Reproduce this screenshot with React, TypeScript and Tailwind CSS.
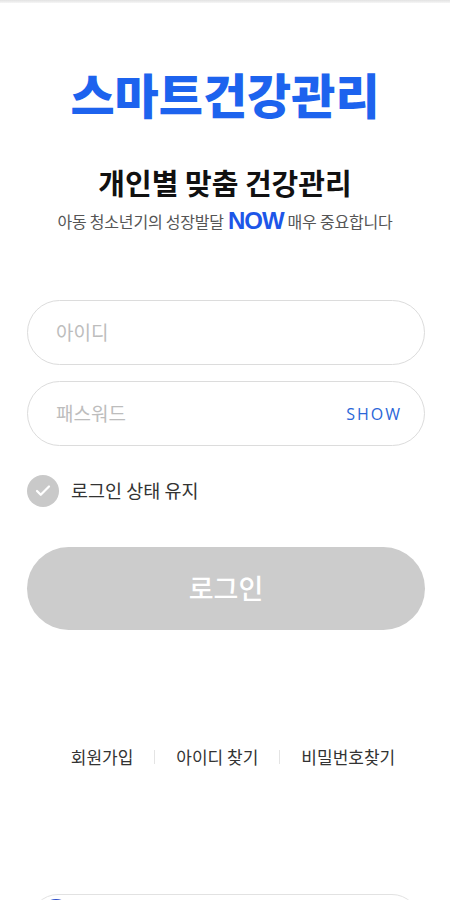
import { Check } from 'lucide-react';

const font = { fontFamily: '"Noto Sans CJK KR", "Noto Sans", sans-serif' };

export default function App() {
  return (
    <div className="h-[900px] w-[450px] overflow-hidden bg-white" style={font}>
      <div className="flex flex-col">
        {/* top edge */}
        <div className="h-[3px] w-full bg-gradient-to-b from-[#e2e2e2] to-[#f6f6f6]" />

        {/* 로고 */}
        <h1 className="mt-[62px] text-center text-[48px] font-black leading-[56px] text-[#1d63ee]">
          스마트건강관리
        </h1>

        {/* 소개 문구 */}
        <h2 className="mt-[42px] text-center text-[29px] font-bold leading-[38px] text-[#111]">
          개인별 맞춤 건강관리
        </h2>
        <p className="mt-[7px] flex items-center justify-center gap-[4px] text-[16px] leading-[26px] tracking-[-0.2px] text-[#555]">
          <span>아동 청소년기의 성장발달</span>
          <span
            className="text-[24px] font-bold leading-[26px] tracking-[-1px] text-[#1d56e8]"
            style={{ fontFamily: '"Liberation Sans", Arial, sans-serif' }}
          >
            NOW
          </span>
          <span>매우 중요합니다</span>
        </p>

        {/* 로그인 폼 */}
        <div className="mt-[66px] flex flex-col pl-[27px] pr-[25px]">
          <div className="flex h-[65px] items-center rounded-full border border-[#dcdcdc] px-[28px]">
            <input
              className="w-full bg-transparent text-[19px] text-[#333] placeholder-[#bdbdbd] outline-none"
              placeholder="아이디"
            />
          </div>
          <div className="mt-[16px] flex h-[65px] items-center rounded-full border border-[#dcdcdc] pl-[28px] pr-[22px]">
            <input
              type="password"
              className="w-full bg-transparent text-[19px] text-[#333] placeholder-[#bdbdbd] outline-none"
              placeholder="패스워드"
            />
            <span
              className="text-[16px] tracking-[2px] text-[#2a66d8]"
              style={{ fontFamily: '"Open Sans", "Noto Sans", sans-serif' }}
            >
              SHOW
            </span>
          </div>

          <label className="mt-[29px] flex items-center gap-[12px]">
            <span className="flex h-[32px] w-[32px] items-center justify-center rounded-full bg-[#c9c9c9]">
              <Check size={18} strokeWidth={3} className="text-white" />
            </span>
            <span className="text-[18.5px] text-[#333]">로그인 상태 유지</span>
          </label>

          <button className="mt-[40px] flex h-[83px] items-center justify-center rounded-full bg-[#cccccc] text-[27px] font-medium text-white">
            로그인
          </button>
        </div>

        {/* 하단 링크 */}
        <div className="mt-[114px] flex items-center justify-center pl-[16px] text-[17px] text-[#333]">
          <span>회원가입</span>
          <span className="mx-[21px] h-[14px] w-px bg-[#e4e4e4]" />
          <span>아이디 찾기</span>
          <span className="mx-[21px] h-[14px] w-px bg-[#e4e4e4]" />
          <span>비밀번호찾기</span>
        </div>

        {/* 간편 로그인 카드 (잘림) */}
        <div className="mx-[30px] mt-[124px] flex h-[56px] items-start rounded-[28px] border border-[#e2e2e2] px-[10px] pt-[4px]">
          <span className="h-[30px] w-[30px] rounded-full bg-[#2a4bc8]" />
        </div>
      </div>
    </div>
  );
}
